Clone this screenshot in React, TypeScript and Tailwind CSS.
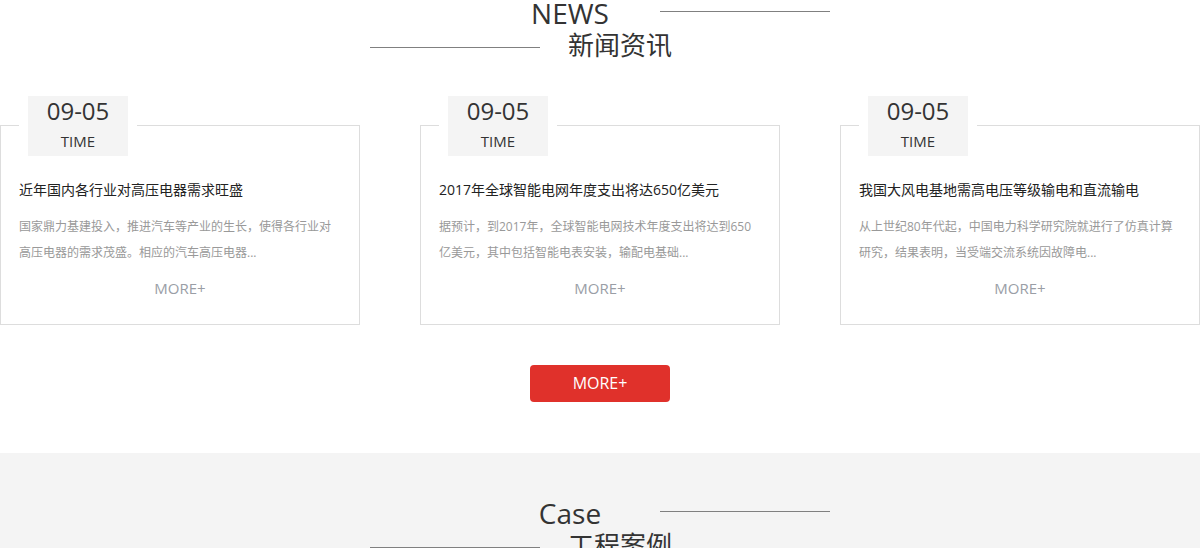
import React from 'react';

const FONT = "font-['Open_Sans','Noto_Sans_CJK_SC',sans-serif]";

const NEWS = [
  {
    date: '09-05',
    title: '近年国内各行业对高压电器需求旺盛',
    lines: ['国家鼎力基建投入，推进汽车等产业的生长，使得各行业对', '高压电器的需求茂盛。相应的汽车高压电器...'],
  },
  {
    date: '09-05',
    title: '2017年全球智能电网年度支出将达650亿美元',
    lines: ['据预计，到2017年，全球智能电网技术年度支出将达到650', '亿美元，其中包括智能电表安装，输配电基础...'],
  },
  {
    date: '09-05',
    title: '我国大风电基地需高电压等级输电和直流输电',
    lines: ['从上世纪80年代起，中国电力科学研究院就进行了仿真计算', '研究，结果表明，当受端交流系统因故障电...'],
  },
];

// Two-row heading: english word + line on the right, line on the left + chinese
function SectionTitle({ en, zh }: { en: string; zh: string }) {
  return (
    <div className="w-[460px] mx-auto">
      <div className="flex items-center h-[30px]">
        <div className="w-[140px]" />
        <div className="w-[120px] text-center text-[28px] leading-[30px] text-[#333] mt-[-4px]">{en}</div>
        <div className="w-[30px]" />
        <div className="w-[170px] h-px bg-[#808080] mt-[-7px]" />
      </div>
      <div className="flex items-center h-[30px]">
        <div className="w-[170px] h-px bg-[#808080] mt-[4px]" />
        <div className="w-[160px] text-center text-[26px] leading-[30px] text-[#333]">{zh}</div>
      </div>
    </div>
  );
}

function NewsCard({ item }: { item: (typeof NEWS)[number] }) {
  return (
    <div className="relative w-[360px] h-[200px] border border-[#dddddd] bg-white px-[18px] pt-[54px]">
      {/* date badge sits over the top border */}
      <div className="absolute top-[-30px] left-[18px] bg-white px-[9px]">
        <div className="w-[100px] h-[60px] bg-[#f4f4f4] flex flex-col items-center text-[#333]">
          <div className="text-[24px] leading-[30px]">{item.date}</div>
          <div className="text-[15px] leading-[30px]">TIME</div>
        </div>
      </div>
      <div className="text-[14px] leading-[20px] text-[#222] whitespace-nowrap">{item.title}</div>
      <div className="mt-[14px] text-[12px] leading-[26px] text-[#999] whitespace-nowrap">
        {item.lines.map((l, i) => (
          <div key={i}>{l}</div>
        ))}
      </div>
      <div className="mt-[12px] text-center text-[15px] leading-[20px] text-[#9a9ea6]">MORE+</div>
    </div>
  );
}

export default function App() {
  return (
    <div className={`${FONT} w-[1200px] bg-white`}>
      <div>
        <SectionTitle en="NEWS" zh="新闻资讯" />
        <div className="mt-[65px] flex justify-between">
          {NEWS.map((n, i) => (
            <NewsCard key={i} item={n} />
          ))}
        </div>
        <div className="mt-[40px] flex justify-center">
          <button className="w-[140px] h-[37px] rounded-[4px] bg-[#e0312b] text-white text-[16px] leading-[37px]">
            MORE+
          </button>
        </div>
      </div>
      <div className="mt-[51px] bg-[#f4f4f4] pt-[47px] h-[200px]">
        <SectionTitle en="Case" zh="工程案例" />
      </div>
    </div>
  );
}
